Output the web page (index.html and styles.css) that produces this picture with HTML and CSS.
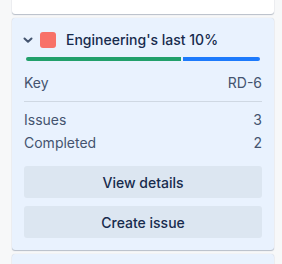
FILE: index.html
```html
<!DOCTYPE html>
<html>
<head>
<meta charset="utf-8">
<link rel="stylesheet" href="styles.css">
</head>
<body>
<div class="column">
  <div class="card card-top"></div>
  <div class="card card-epic">
    <div class="epic-head">
      <svg class="chev" width="10" height="20" viewBox="0 0 10 20"><path d="M1.5 8.5 L5 11.8 L8.5 8.5" fill="none" stroke="#44546f" stroke-width="2" stroke-linecap="round" stroke-linejoin="round"/></svg>
      <span class="swatch"></span>
      <span class="epic-title">Engineering's last 10%</span>
    </div>
    <div class="progress">
      <span class="seg seg-done" style="width:155px"></span>
      <span class="seg seg-todo"></span>
    </div>
    <div class="row row-key"><span>Key</span><span>RD-6</span></div>
    <div class="stats">
      <div class="row"><span>Issues</span><span>3</span></div>
      <div class="row"><span>Completed</span><span>2</span></div>
    </div>
    <div class="actions">
      <button class="btn">View details</button>
      <button class="btn">Create issue</button>
    </div>
  </div>
  <div class="card card-next"></div>
</div>
</body>
</html>
```
FILE: styles.css
```css
html, body {
  margin: 0;
  padding: 0;
  background: #f7f8f9;
  overflow: hidden;
}
body {
  font-family: Inter, "Noto Sans", sans-serif;
  font-size: 14px;
  line-height: 20px;
  color: #172b4d;
  padding: 0 8px 0 12px;
}
.column {
  display: flex;
  flex-direction: column;
  gap: 4px;
}
.card {
  border-radius: 3px;
  box-shadow: 0 1px 1px rgba(9, 30, 66, 0.25), 0 0 1px rgba(9, 30, 66, 0.2);
}
.card-top {
  background: #ffffff;
  height: 34px;
  margin-top: -20px;
}
.card-epic {
  background: #e9f2fe;
  padding: 12px;
  height: 232px;
  box-sizing: border-box;
}
.epic-head {
  display: flex;
  align-items: center;
  height: 20px;
}
.chev {
  margin-left: -1px;
  margin-right: 7px;
  display: block;
}
.swatch {
  width: 16px;
  height: 16px;
  border-radius: 3px;
  background: #f87168;
  margin-right: 10px;
}
.epic-title {
  font-weight: 500;
  color: #172b4d;
}
.progress {
  display: flex;
  gap: 2px;
  margin: 7px 2px 0 2px;
  height: 4px;
}
.seg {
  display: block;
  height: 4px;
}
.seg-done {
  background: #22a06b;
  border-radius: 2px 0 0 2px;
}
.seg-todo {
  flex: 1;
  background: #1d7afc;
  border-radius: 0 2px 2px 0;
}
.row {
  display: flex;
  justify-content: space-between;
  color: #44546f;
}
.row-key {
  margin-top: 12px;
  padding-bottom: 8px;
  border-bottom: 1px solid #cfd8e3;
}
.stats {
  display: flex;
  flex-direction: column;
  gap: 3px;
  padding-top: 8px;
}
.actions {
  display: flex;
  flex-direction: column;
  gap: 8px;
  margin-top: 13px;
}
.btn {
  height: 32px;
  border: none;
  border-radius: 3px;
  background: #dce6f1;
  color: #172b4d;
  font-family: Inter, "Noto Sans", sans-serif;
  font-size: 14px;
  font-weight: 500;
  padding: 0;
}
.card-next {
  background: #e9f2fe;
  height: 40px;
}
```
